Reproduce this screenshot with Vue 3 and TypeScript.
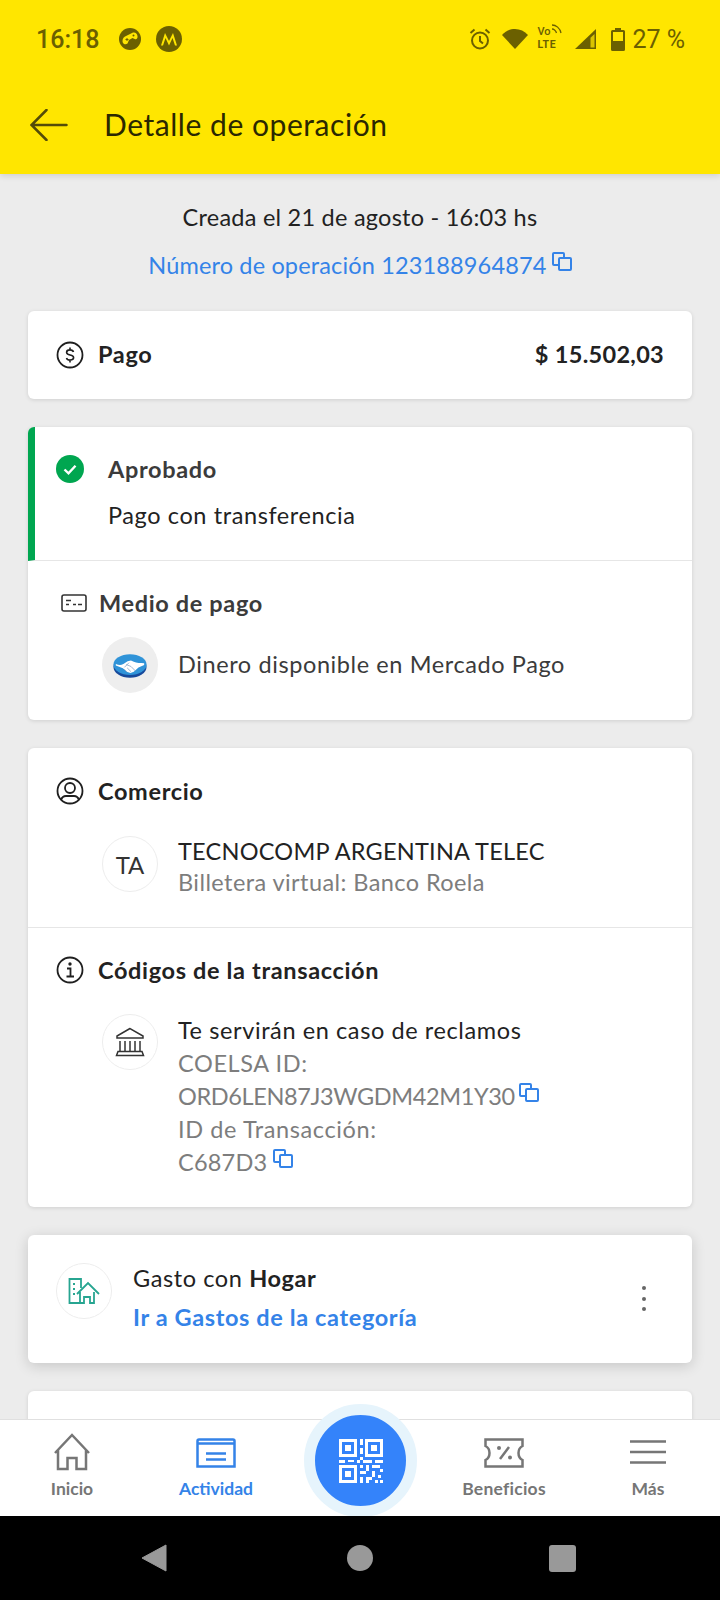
<template>
  <div class="screen">
    <header class="topbar">
      <div class="status">
        <span class="time">16:18</span>
        <svg class="game" width="22" height="22" viewBox="0 0 22 22">
          <circle cx="11" cy="11" r="11" fill="#6b6000" />
          <path d="M3.500 13c0-2.500 1.500-4.500 3.500-5l7-3.500c2.500-.5 4 1 4.500 3.500.4 2.500-1 3.800-2.800 3l-2.200-1-3.500 2-1.500 3.500c-1.500 1.200-3.500.9-4.500-.5-.3-.6-.5-1.300-.5-2z" fill="#ffe600" />
          <circle cx="14.500" cy="7.500" r="1" fill="#6b6000" />
          <path d="M6.500 11.500h3M8 10v3" stroke="#6b6000" stroke-width="1" />
        </svg>
        <svg class="moto" width="26" height="26" viewBox="0 0 26 26">
          <circle cx="13" cy="13" r="13" fill="#6b6000" />
          <path d="M5 19.500 9 7l4 8 4-8 4 12.500h-2L16.500 12 13 19.500 9.500 12l-2.500 7.500z" fill="#ffe600" />
        </svg>
        <span class="spacer"></span>
        <svg class="alarm" width="22" height="22" viewBox="0 0 21 22" fill="none" stroke="#6b6000" stroke-width="2">
          <circle cx="10.500" cy="12.500" r="8" />
          <path d="M10.500 8v5l3 2.500M1 5l4-3.500M20 5l-4-3.500" />
        </svg>
        <svg class="wifi" width="26" height="20" viewBox="0 0 26 20"><path d="M0 6C3.500 2 8 0 13 0s9.500 2 13 6L13 20z" fill="#6b6000" /></svg>
        <div class="volte">
          <span>Vo</span><svg width="11" height="10" viewBox="0 0 11 10" fill="none" stroke="#6b6000" stroke-width="1.300"><path d="M1 1c4 0 8 3 9 8M1 5c2 0 4 2 4.500 4" /></svg>
          <b>LTE</b>
        </div>
        <svg class="signal" width="21" height="20" viewBox="0 0 21 20">
          <path d="M0 20 21 0v20z" fill="#6b6000" />
          <path d="M15.500 18.500h4V5l-4 3.800z" fill="#ffe600" opacity=".75" />
        </svg>
        <svg class="battery" width="14" height="23" viewBox="0 0 14 23">
          <path d="M4 0h6v2h2.500q1.500 0 1.500 1.500V21.500q0 1.500-1.500 1.500h-11Q0 23 0 21.500V3.500Q0 2 1.500 2H4z" fill="#6b6000" />
          <rect x="2" y="4" width="10" height="9" fill="#ffe600" />
        </svg>
        <span class="percent">27 %</span>
      </div>
      <div class="toolbar">
        <svg width="38" height="32" viewBox="0 0 38 32" fill="none" stroke="#544c08" stroke-width="2.500" stroke-linecap="round">
          <path d="M36.500 16H2M16.500 1 1.500 16l15 15" />
        </svg>
        <h1>Detalle de operación</h1>
      </div>
    </header>

    <main class="content">
      <p class="created">Creada el 21 de agosto - 16:03 hs</p>
      <p class="opnumber">
        Número de operación 123188964874
        <svg class="copy" width="20" height="19" viewBox="0 0 20 19"><use href="#copy-icon" /></svg>
      </p>

      <section class="card amount-card">
        <svg class="head-icon" width="28" height="28" viewBox="0 0 28 28" fill="none" stroke="#1f1f1f" stroke-width="1.800">
          <circle cx="14" cy="14" r="12.500" />
          <path d="M17.500 11c-.4-1.400-1.700-2.100-3.500-2.100-2 0-3.400 1-3.400 2.500 0 3.500 7 1.800 7 5.200 0 1.500-1.500 2.500-3.600 2.500-1.800 0-3.100-.8-3.500-2.100M14 6.500v2.400M14 19.100v2.400" stroke-width="1.600" />
        </svg>
        <strong class="title">Pago</strong>
        <strong class="amount">$ 15.502,03</strong>
      </section>

      <section class="card">
        <div class="approved">
          <svg width="28" height="28" viewBox="0 0 28 28">
            <circle cx="14" cy="14" r="14" fill="#00a650" />
            <path d="m8.500 14.500 4 3.800 7-7.500" fill="none" stroke="#fff" stroke-width="2.400" />
          </svg>
          <div class="approved-text">
            <strong class="title soft">Aprobado</strong>
            <p class="line dark">Pago con transferencia</p>
          </div>
        </div>
        <div class="block medio">
          <div class="block-head">
            <svg width="26" height="18" viewBox="0 0 26 18" fill="none" stroke="#333" stroke-width="1.600">
              <rect x="1" y="1" width="24" height="16" rx="2" />
              <path d="M5 6.500h5M5 10.500h3M12 10.500h3M17 10.500h4" />
            </svg>
            <strong class="title soft">Medio de pago</strong>
          </div>
          <div class="row centered">
            <span class="avatar grey">
              <svg width="34" height="25" viewBox="0 0 36 26">
                <ellipse cx="18" cy="14.500" rx="17.500" ry="11.500" fill="#174a9c" />
                <ellipse cx="18" cy="12" rx="17.500" ry="11" fill="#2f93d8" />
                <path d="M3 11.500c3 1 5 1.500 8 0l4.500-3 3.500-.8 3 1.300c3 1.300 7 1.500 11 1.500v2l-6 2.500-5 4.500-3.500 1.500-4-1.500-4-3.500-7.500-3z" fill="#fff" />
                <path d="m14 12 5 2 5 5M17 10l-5 5M12 17l3 3M15 15.500l4 4" fill="none" stroke="#7f9fc4" stroke-width=".8" />
              </svg>
            </span>
            <p class="line soft-dark">Dinero disponible en Mercado Pago</p>
          </div>
        </div>
      </section>

      <section class="card">
        <div class="block commerce">
          <div class="block-head">
            <svg class="head-icon" width="28" height="28" viewBox="0 0 28 28" fill="none" stroke="#1f1f1f" stroke-width="1.800">
              <circle cx="14" cy="14" r="12.500" />
              <circle cx="14" cy="11" r="5" />
              <path d="M5 23c1-3 3-4 5-4h8c2 0 4 1 5 4" />
            </svg>
            <strong class="title">Comercio</strong>
          </div>
          <div class="row">
            <span class="avatar ring initials">TA</span>
            <div class="lines">
              <p class="line dark merchant">TECNOCOMP ARGENTINA TELEC</p>
              <p class="line muted wallet">Billetera virtual: Banco Roela</p>
            </div>
          </div>
        </div>
        <div class="block codes">
          <div class="block-head">
            <svg class="head-icon" width="28" height="28" viewBox="0 0 28 28" fill="none" stroke="#1f1f1f" stroke-width="1.800">
              <circle cx="14" cy="14" r="12.500" />
              <path d="M11 12.500h3.500V20M10.500 20.500h7.500" />
              <circle cx="14" cy="8" r=".8" fill="#1f1f1f" />
            </svg>
            <strong class="title">Códigos de la transacción</strong>
          </div>
          <div class="row">
            <span class="avatar ring">
              <svg width="30" height="30" viewBox="0 0 30 30" fill="none" stroke="#333" stroke-width="1.500">
                <path d="M15 1.500 2 9v2h26V9zM5 14v10M10 14v10M15 14v10M20 14v10M25 14v10M3.500 24.500h23M1.500 28.500h27l-1.500-4H3z" />
              </svg>
            </span>
            <div class="lines code-lines">
              <p class="line dark">Te servirán en caso de reclamos</p>
              <p class="line muted">COELSA ID:</p>
              <p class="line muted code">ORD6LEN87J3WGDM42M1Y30 <svg class="copy" width="20" height="19" viewBox="0 0 20 19"><use href="#copy-icon" /></svg></p>
              <p class="line muted">ID de Transacción:</p>
              <p class="line muted short-code">C687D3 <svg class="copy" width="20" height="19" viewBox="0 0 20 19"><use href="#copy-icon" /></svg></p>
            </div>
          </div>
        </div>
      </section>

      <section class="card spending">
        <span class="avatar ring">
          <svg width="32" height="28" viewBox="0 0 32 28" fill="none" stroke="#27a591" stroke-width="1.800">
            <path d="M14 26H1.500V2H13v9M5 7h2M5 12h2M5 17h2" />
            <path d="M9 17 20 6l11 11M12 15v11h4v-6h6v6h4V15" />
          </svg>
        </span>
        <div class="lines spending-lines">
          <p class="line dark">Gasto con <b>Hogar</b></p>
          <a class="category-link">Ir a Gastos de la categoría</a>
        </div>
        <div class="dots"><i></i><i></i><i></i></div>
      </section>

      <section class="card next-card"></section>
    </main>

    <nav class="tabs">
      <div class="tab">
        <svg class="home" width="36" height="38" viewBox="0 0 36 38" fill="none" stroke="#767676" stroke-width="2.500">
          <path d="M1 20 18 2l17 18M4 17v19h9.500V25h9v11H32V17" />
        </svg>
        <span>Inicio</span>
      </div>
      <div class="tab active">
        <svg width="40" height="30" viewBox="0 0 40 30" fill="none" stroke="#3483e8" stroke-width="2.500">
          <path d="M1.500 28.500V3q0-1.500 1.500-1.500h34q1.500 0 1.500 1.500v25.500zM1.500 5.500h37M10 15.500h20M10 21.500h20" />
        </svg>
        <span>Actividad</span>
      </div>
      <div class="tab"></div>
      <div class="tab">
        <svg width="40" height="30" viewBox="0 0 40 30" fill="none" stroke="#767676" stroke-width="2.500">
          <path d="M1.500 1.500h37v6.500q-4 2-4 7t4 7v6.500h-37V22q4-2 4-7t-4-7zM25 9l-9 12" />
          <circle cx="15" cy="10" r="2" fill="#767676" stroke="none" />
          <circle cx="26" cy="19.500" r="2" fill="#767676" stroke="none" />
        </svg>
        <span class="wide">Beneficios</span>
      </div>
      <div class="tab">
        <svg width="36" height="30" viewBox="0 0 36 30" fill="none" stroke="#767676" stroke-width="2.500">
          <path d="M0 3.500h36M0 14h36M0 24.500h36" />
        </svg>
        <span>Más</span>
      </div>
      <div class="qr-button">
        <svg width="44" height="44" viewBox="0 0 44 44" fill="#fff">
          <path d="M0 0h18v18H0zm3 3v12h12V3zm3 3h6v6H6zM26 0h18v18H26zm3 3v12h12V3zm3 3h6v6h-6zM0 26h18v18H0zm3 3v12h12V29zm3 3h6v6H6z" fill-rule="evenodd" />
          <rect v-for="b in qrBits" :key="b.join()" :x="b[0]" :y="b[1]" :width="b[2]" :height="b[3]" />
        </svg>
      </div>
    </nav>

    <footer class="sysbar">
      <svg width="26" height="28" viewBox="0 0 26 28"><path d="M25 1v26L1 14z" fill="#999" stroke="#999" stroke-linejoin="round" /></svg>
      <i class="sys-circle"></i>
      <i class="sys-square"></i>
    </footer>

    <svg width="0" height="0" class="defs">
      <symbol id="copy-icon" viewBox="0 0 20 19">
        <path d="M7 13H2q-1 0-1-1V2q0-1 1-1h9q1 0 1 1v4M8 6h10q1 0 1 1v10q0 1-1 1H8q-1 0-1-1V7q0-1 1-1z" fill="none" stroke="#3483e8" stroke-width="2" />
      </symbol>
    </svg>
  </div>
</template>

<script setup lang="ts">
// resto del QR: x, y, ancho, alto
const qrBits: number[][] = [
  [21, 0, 3, 6], [21, 9, 3, 6], [21, 18, 3, 3], [0, 21, 6, 3], [9, 21, 6, 2],
  [18, 21, 3, 3], [24, 21, 9, 3], [36, 21, 8, 3], [21, 26, 3, 3], [27, 26, 3, 6],
  [33, 26, 8, 3], [21, 32, 6, 3], [33, 32, 3, 6], [41, 30, 3, 3], [21, 38, 3, 6],
  [27, 38, 6, 3], [39, 36, 3, 3], [27, 41, 3, 3], [36, 41, 3, 3], [41, 41, 3, 3],
]
</script>

<style>
html,
body {
  margin: 0;
  background: #ececec;
}
</style>

<style scoped>
.screen {
  width: 720px;
  height: 1600px;
  display: flex;
  flex-direction: column;
  overflow: hidden;
  background: #ececec;
  font-family: Lato, "Liberation Sans", sans-serif;
  color: #222;
}
p,
h1 {
  margin: 0;
  font-weight: 400;
}
.defs {
  position: absolute;
}
.topbar {
  height: 174px;
  flex: none;
  background: #ffe600;
  box-shadow: 0 2px 6px rgba(0, 0, 0, 0.12);
  position: relative;
  z-index: 1;
}
.status {
  height: 78px;
  display: flex;
  align-items: center;
  padding: 0 35px 0 36px;
  color: #6b6000;
  font-family: Roboto, sans-serif;
  font-size: 25px;
}
.time {
  font-weight: 500;
}
.game {
  margin-left: 20px;
}
.moto {
  margin-left: 15px;
}
.spacer {
  flex: 1;
}
.wifi {
  margin-left: 11px;
}
.volte {
  width: 27px;
  margin-left: 9px;
  margin-top: -3px;
  line-height: 13px;
  font-size: 11px;
  font-weight: 500;
}
.volte span {
  margin-right: 1px;
}
.volte svg {
  vertical-align: 1px;
}
.volte b {
  display: block;
  font-size: 10.500px;
  font-weight: 700;
  letter-spacing: 0.7px;
}
.signal {
  margin-left: 11px;
}
.battery {
  margin-left: 15px;
}
.percent {
  margin-left: 7px;
}
.toolbar {
  height: 94px;
  display: flex;
  align-items: center;
  gap: 36px;
  padding-left: 30px;
  box-sizing: border-box;
}
.toolbar h1 {
  font-size: 30px;
  letter-spacing: 0.55px;
  color: #2b2800;
  padding-bottom: 3px;
}
.content {
  flex: 1;
  min-height: 0;
  overflow: hidden;
  padding: 27px 28px 0;
}
.created,
.opnumber {
  text-align: center;
  line-height: 32px;
  font-size: 23.500px;
  letter-spacing: 0.24px;
}
.opnumber {
  margin: 16px 0 30px;
  color: #3483e8;
  letter-spacing: 0.15px;
}
.copy {
  vertical-align: 3px;
  margin-left: -1px;
}
.card {
  background: #fff;
  border-radius: 6px;
  box-shadow: 0 1px 4px rgba(0, 0, 0, 0.12);
  margin-bottom: 28px;
  overflow: hidden;
}
.amount-card {
  height: 88px;
  display: flex;
  align-items: center;
  padding: 0 28px;
  gap: 14px;
}
.amount-card strong {
  margin-bottom: 3px;
}
.head-icon {
  flex: none;
}
.title {
  font-size: 23.500px;
  font-weight: 700;
  letter-spacing: 0.65px;
  color: #222;
  line-height: 30px;
}
.title.soft {
  color: #3b3b3b;
}
.amount {
  margin-left: auto;
  font-size: 23.500px;
  font-weight: 700;
  letter-spacing: 0.3px;
}
.approved {
  height: 134px;
  box-sizing: border-box;
  border-left: 7px solid #00a650;
  border-bottom: 1px solid #e6e6e6;
  padding: 28px 0 0 21px;
  display: flex;
  gap: 24px;
}
.approved-text {
  display: flex;
  flex-direction: column;
  gap: 15px;
  margin-top: -1px;
}
.line {
  font-size: 23.500px;
  line-height: 32px;
  letter-spacing: 0.6px;
}
.dark {
  color: #222;
}
.soft-dark {
  color: #3b3b3b;
}
.muted {
  color: #7d7d7d;
}
.merchant {
  letter-spacing: 0.24px;
}
.wallet {
  letter-spacing: 0.42px;
}
.code {
  letter-spacing: -0.38px;
}
.short-code {
  letter-spacing: 0.2px;
}
.block-head {
  display: flex;
  align-items: center;
  gap: 14px;
}
.medio {
  padding: 27px 28px 27px 33px;
}
.medio .title {
  margin-left: -2px;
}
.medio .line {
  margin-bottom: 2px;
}
.row {
  display: flex;
  gap: 20px;
  padding-left: 46px;
}
.centered {
  align-items: center;
}
.medio .row {
  margin-top: 19px;
  padding-left: 41px;
}
.avatar {
  flex: none;
  width: 56px;
  height: 56px;
  border-radius: 50%;
  display: flex;
  align-items: center;
  justify-content: center;
  box-sizing: border-box;
}
.grey {
  background: #eee;
}
.ring {
  border: 1px solid #ededed;
}
.initials {
  font-size: 24px;
  color: #333;
}
.commerce {
  padding: 28px 28px 29px;
  border-bottom: 1px solid #e6e6e6;
}
.commerce .row {
  margin-top: 30px;
}
.lines .line {
  line-height: 31px;
}
.codes {
  padding: 27px 28px 28px;
}
.codes .row {
  margin-top: 29px;
}
.lines.code-lines .line {
  line-height: 33px;
}
.spending {
  height: 128px;
  display: flex;
  align-items: center;
  padding: 0 28px 4px;
  box-sizing: border-box;
  box-shadow: 0 3px 14px rgba(0, 0, 0, 0.16);
  gap: 21px;
}
.spending .avatar {
  margin-bottom: 12px;
}
.spending-lines {
  flex: 1;
}
.spending-lines b {
  font-weight: 700;
}
.category-link {
  display: block;
  margin-top: 8px;
  font-size: 23.500px;
  font-weight: 700;
  letter-spacing: 0.62px;
  line-height: 30px;
  color: #3483e8;
}
.dots {
  display: flex;
  flex-direction: column;
  gap: 6.500px;
  margin-right: 18px;
  margin-top: 3px;
}
.dots i {
  width: 4px;
  height: 4px;
  border-radius: 50%;
  background: #666;
}
.next-card {
  height: 80px;
  margin-bottom: 0;
}
.tabs {
  height: 97px;
  flex: none;
  display: grid;
  grid-template-columns: repeat(5, 144px);
  background: #fff;
  border-top: 1px solid #e0e0e0;
  box-sizing: border-box;
  position: relative;
}
.tab {
  display: flex;
  flex-direction: column;
  align-items: center;
  justify-content: flex-end;
  gap: 11px;
  padding-bottom: 17px;
  color: #767676;
  font-size: 17.500px;
  font-weight: 700;
  line-height: 20px;
}
.tab .wide {
  letter-spacing: 0.25px;
}
.home {
  margin-bottom: -3px;
}
.tab.active {
  color: #3483e8;
}
.qr-button {
  position: absolute;
  left: 304px;
  top: -16px;
  width: 91px;
  height: 91px;
  border-radius: 50%;
  background: #3483fa;
  border: 11px solid #e6f4fc;
  display: flex;
  align-items: center;
  justify-content: center;
}
.sysbar {
  height: 84px;
  flex: none;
  background: #000;
  position: relative;
  display: flex;
  align-items: center;
  padding-left: 141px;
  box-sizing: border-box;
}
.sys-circle {
  width: 26px;
  height: 26px;
  border-radius: 50%;
  background: #999;
  margin-left: 180px;
}
.sys-square {
  width: 27px;
  height: 27px;
  border-radius: 3px;
  background: #999;
  margin-left: 176px;
}
</style>
